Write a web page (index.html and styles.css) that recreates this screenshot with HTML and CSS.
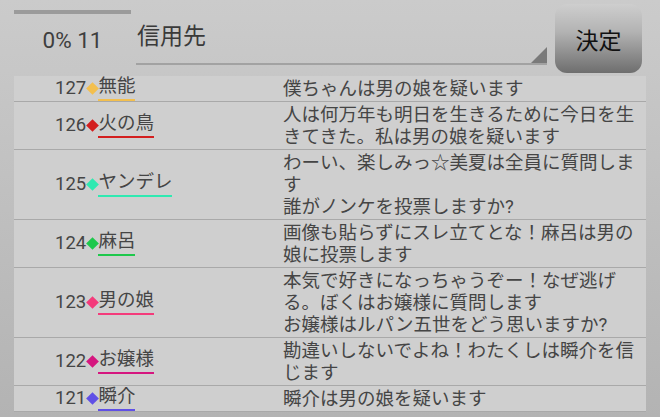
FILE: index.html
```html
<!DOCTYPE html>
<html lang="ja">

<head>
    <meta charset="UTF-8">
    <meta name="viewport" content="width=device-width, initial-scale=1.0">
    <title>信用先</title>
    <link rel="stylesheet" href="styles.css">
</head>

<body>
    <header class="bar">
        <div class="counter">
            <div class="progress"></div>
            <div class="count">0% 11</div>
        </div>
        <div class="picker">
            <span class="picker-label">信用先</span>
            <span class="picker-arrow"></span>
        </div>
        <button class="submit">決定</button>
    </header>

    <div class="list">
        <div class="row">
            <div class="who"><span class="num">127</span><span class="gem c-gold"></span><span class="name c-gold">無能</span></div>
            <div class="msg">僕ちゃんは男の娘を疑います</div>
        </div>
        <div class="row">
            <div class="who"><span class="num">126</span><span class="gem c-red"></span><span class="name c-red">火の鳥</span></div>
            <div class="msg">人は何万年も明日を生きるために今日を生<br>きてきた。私は男の娘を疑います</div>
        </div>
        <div class="row">
            <div class="who"><span class="num">125</span><span class="gem c-mint"></span><span class="name c-mint">ヤンデレ</span></div>
            <div class="msg">わーい、楽しみっ☆美夏は全員に質問しま<br>す<br>誰がノンケを投票しますか?</div>
        </div>
        <div class="row">
            <div class="who"><span class="num">124</span><span class="gem c-green"></span><span class="name c-green">麻呂</span></div>
            <div class="msg">画像も貼らずにスレ立てとな！麻呂は男の<br>娘に投票します</div>
        </div>
        <div class="row">
            <div class="who"><span class="num">123</span><span class="gem c-pink"></span><span class="name c-pink">男の娘</span></div>
            <div class="msg">本気で好きになっちゃうぞー！なぜ逃げ<br>る。ぼくはお嬢様に質問します<br>お嬢様はルパン五世をどう思いますか?</div>
        </div>
        <div class="row">
            <div class="who"><span class="num">122</span><span class="gem c-magenta"></span><span class="name c-magenta">お嬢様</span></div>
            <div class="msg">勘違いしないでよね！わたくしは瞬介を信<br>じます</div>
        </div>
        <div class="row">
            <div class="who"><span class="num">121</span><span class="gem c-violet"></span><span class="name c-violet">瞬介</span></div>
            <div class="msg">瞬介は男の娘を疑います</div>
        </div>
    </div>
</body>

</html>
```

FILE: styles.css
```css
html,
body {
    height: 100%;
}

body {
    margin: 0;
    padding: 0;
    overflow: hidden;
    font-family: Roboto, "Noto Sans CJK JP", sans-serif;
    color: #454545;
    background: linear-gradient(#cbcbcb, #b3b3b3);
}

.bar {
    display: flex;
    align-items: flex-start;
    padding: 4px 3px 0 14px;
    height: 69px;
}

.counter {
    width: 117px;
}

.progress {
    margin-top: 6px;
    height: 4px;
    background: #9b9b9b;
}

.count {
    margin-top: 13px;
    font-size: 22.5px;
    line-height: 26px;
    text-align: center;
    color: #3e3e3e;
}

.picker {
    position: relative;
    margin-left: 5px;
    width: 411px;
    height: 61px;
    padding: 21px 0 0 1px;
    box-sizing: border-box;
    border-bottom: 2px solid #a2a2a2;
}

.picker-label {
    display: block;
    font-size: 23px;
    line-height: 23px;
    color: #3a3a3a;
}

.picker-arrow {
    position: absolute;
    right: 0;
    bottom: 0;
    width: 0;
    height: 0;
    border-left: 16px solid transparent;
    border-bottom: 16px solid #7a7a7a;
}

.submit {
    margin-left: 8px;
    width: 87px;
    height: 69px;
    border: none;
    border-radius: 12px;
    padding: 0;
    font-family: inherit;
    font-size: 23px;
    color: #111;
    background: linear-gradient(#cecece 0%, #b3b3b3 40%, #6e6e6e 100%);
}

.list {
    margin: 3px 14px 0;
    background: #cfcfcf;
}

.row {
    display: grid;
    grid-template-columns: 269px 1fr;
    align-items: center;
    border-bottom: 1px solid #a9a9a9;
}

.who {
    display: flex;
    align-items: center;
    padding-left: 41px;
    font-size: 18.5px;
}

.num {
    line-height: 21px;
}

.gem {
    display: inline-block;
    width: 9px;
    height: 9px;
    margin: 0 1.6px;
    transform: rotate(45deg);
}

.name {
    line-height: 21px;
    padding: 0 0 2px;
    border-bottom: 2px solid;
    color: #454545;
}

.msg {
    padding: 2px 0 1px;
    font-size: 18.5px;
    line-height: 22px;
    white-space: nowrap;
}

.gem.c-gold { background: #f3bf4e; }
.name.c-gold { border-color: #f3bf4e; }
.gem.c-red { background: #d31f1f; }
.name.c-red { border-color: #d31f1f; }
.gem.c-mint { background: #2fe9b1; }
.name.c-mint { border-color: #2fe9b1; }
.gem.c-green { background: #1ec84c; }
.name.c-green { border-color: #1ec84c; }
.gem.c-pink { background: #f43b7b; }
.name.c-pink { border-color: #f43b7b; }
.gem.c-magenta { background: #d5167f; }
.name.c-magenta { border-color: #d5167f; }
.gem.c-violet { background: #6050e6; }
.name.c-violet { border-color: #6050e6; }
```
